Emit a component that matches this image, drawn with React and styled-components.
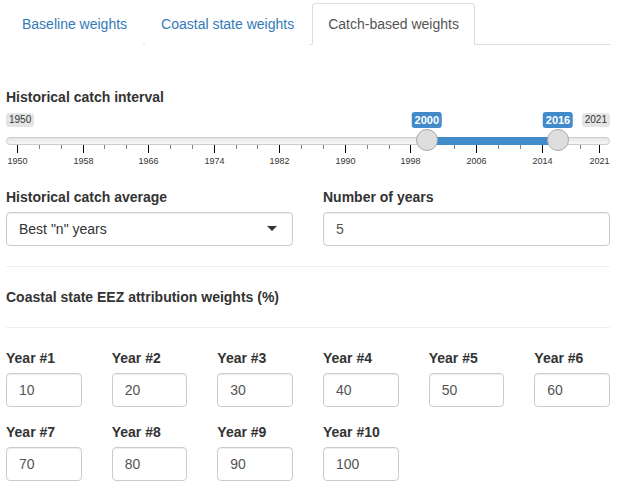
import React from "react";
import styled, { createGlobalStyle } from "styled-components";

const GlobalStyle = createGlobalStyle`
  html, body { margin: 0; padding: 0; background: #fff; }
  body {
    font-family: "Liberation Sans", Arial, Helvetica, sans-serif;
    font-size: 14px;
    line-height: 20px;
    color: #333;
  }
  * { box-sizing: border-box; }
`;

const Page = styled.div`
  width: 620px;
  padding: 3px 10px 0 6px;
`;

const TabBar = styled.ul`
  display: flex;
  list-style: none;
  margin: 0;
  padding: 0;
  border-bottom: 1px solid #ddd;
`;

const Tab = styled.li`
  margin: 0 2px -1px 0;
  padding: 10px 15px;
  line-height: 20px;
  border: 1px solid ${(p) => (p.$active ? "#ddd" : "transparent")};
  border-bottom-color: transparent;
  border-radius: 4px 4px 0 0;
  background: #fff;
  color: ${(p) => (p.$active ? "#555" : "#337ab7")};
  cursor: pointer;
`;

const TabContent = styled.div`
  padding-top: 42px;
`;

const FormGroup = styled.div`
  margin-bottom: 15px;
`;

const Label = styled.label`
  display: block;
  font-weight: 700;
  margin-bottom: 5px;
`;

const TwoCol = styled.div`
  display: grid;
  grid-template-columns: 1fr 1fr;
  column-gap: 30px;
`;

const Divider = styled.hr`
  border: 0;
  border-top: 1px solid #eee;
  height: 0;
  margin: ${(p) => p.$top}px 0 20px 0;
`;

const SectionTitle = styled.div`
  font-weight: 700;
`;

const YearGrid = styled.div`
  display: grid;
  grid-template-columns: repeat(6, 1fr);
  column-gap: 30px;
`;

const Input = styled.input`
  display: block;
  width: 100%;
  height: 34px;
  padding: 6px 12px;
  font-family: inherit;
  font-size: 14px;
  line-height: 20px;
  color: #555;
  background: #fff;
  border: 1px solid #ccc;
  border-radius: 4px;
  box-shadow: inset 0 1px 1px rgba(0, 0, 0, 0.075);
  outline: none;
`;

const SelectBox = styled.div`
  display: flex;
  align-items: center;
  justify-content: space-between;
  height: 34px;
  padding: 6px 15px 6px 12px;
  color: #333;
  background: #fff;
  border: 1px solid #ccc;
  border-radius: 4px;
  box-shadow: inset 0 1px 1px rgba(0, 0, 0, 0.075);
`;

const Caret = styled.span`
  width: 0;
  height: 0;
  border-style: solid;
  border-width: 5px 5px 0 5px;
  border-color: #333 transparent transparent transparent;
  margin-top: -2px;
`;

/* ---------- range slider ---------- */
const MIN = 1950;
const MAX = 2021;
const PX = 582 / (MAX - MIN);
const pos = (v) => 11 + (v - MIN) * PX;

const Slider = styled.div`
  position: relative;
  height: 60px;
`;

const Track = styled.div`
  position: absolute;
  left: 0;
  right: 0;
  top: 25px;
  height: 8px;
  border: 1px solid #ccc;
  border-radius: 8px;
  background: linear-gradient(to bottom, #dedede -50%, #fff 150%);
  background-color: #ededed;
`;

const Bar = styled.div`
  position: absolute;
  top: 25px;
  height: 8px;
  background: #428bca;
`;

const Handle = styled.div`
  position: absolute;
  top: 17px;
  width: 22px;
  height: 22px;
  border: 1px solid #ababab;
  border-radius: 50%;
  background: #dedede;
`;

const EdgeTag = styled.span`
  position: absolute;
  top: 1px;
  ${(p) => (p.$side === "right" ? "right: 0;" : "left: 0;")}
  padding: 1px 3px;
  font-size: 10px;
  line-height: 12px;
  color: #333;
  background: rgba(0, 0, 0, 0.1);
  border-radius: 3px;
`;

const ValueTag = styled.span`
  position: absolute;
  top: 0;
  transform: translateX(-50%);
  padding: 1px 3px;
  font-size: 11px;
  font-weight: 700;
  line-height: 14px;
  color: #fff;
  background: #428bca;
  border-radius: 3px;
`;

const Tick = styled.span`
  position: absolute;
  top: 33px;
  width: 1px;
  height: ${(p) => (p.$small ? 4 : 8)}px;
  background: #000;
  opacity: ${(p) => (p.$small ? 0.5 : 1)};
`;

const TickText = styled.span`
  position: absolute;
  top: 44px;
  transform: translateX(-50%);
  font-size: 9px;
  line-height: 11px;
  color: #333;
  white-space: nowrap;
`;

const bigTicks = [1950, 1958, 1966, 1974, 1982, 1990, 1998, 2006, 2014, 2021];

function RangeSlider({ from, to }) {
  const smalls = [];
  for (let i = 1; i < bigTicks.length; i++) {
    const a = bigTicks[i - 1];
    const b = bigTicks[i];
    smalls.push(a + (b - a) / 3, a + (2 * (b - a)) / 3);
  }
  return (
    <Slider>
      <EdgeTag>{MIN}</EdgeTag>
      <EdgeTag $side="right">{MAX}</EdgeTag>
      <Track />
      <Bar style={{ left: pos(from), width: pos(to) - pos(from) }} />
      {smalls.map((v, i) => (
        <Tick key={"s" + i} $small style={{ left: Math.round(pos(v)) }} />
      ))}
      {bigTicks.map((v) => (
        <Tick key={v} style={{ left: Math.round(pos(v)) }} />
      ))}
      {bigTicks.map((v) => (
        <TickText key={"t" + v} style={{ left: Math.round(pos(v)) + 0.5 }}>
          {v}
        </TickText>
      ))}
      <ValueTag style={{ left: pos(from) }}>{from}</ValueTag>
      <ValueTag style={{ left: pos(to) }}>{to}</ValueTag>
      <Handle style={{ left: pos(from) - 11 }} />
      <Handle style={{ left: pos(to) - 11 }} />
    </Slider>
  );
}

const years = [10, 20, 30, 40, 50, 60, 70, 80, 90, 100];

export default function App() {
  return (
    <>
      <GlobalStyle />
      <Page>
        <TabBar>
          <Tab>Baseline weights</Tab>
          <Tab>Coastal state weights</Tab>
          <Tab $active>Catch-based weights</Tab>
        </TabBar>
        <TabContent>
          <FormGroup>
            <Label>Historical catch interval</Label>
            <RangeSlider from={2000} to={2016} />
          </FormGroup>
          <TwoCol>
            <FormGroup>
              <Label>Historical catch average</Label>
              <SelectBox>
                <span>Best "n" years</span>
                <Caret />
              </SelectBox>
            </FormGroup>
            <FormGroup>
              <Label>Number of years</Label>
              <Input type="text" value="5" readOnly />
            </FormGroup>
          </TwoCol>
          <Divider $top={5} />
          <SectionTitle>Coastal state EEZ attribution weights (%)</SectionTitle>
          <Divider $top={20} />
          <YearGrid>
            {years.map((v, i) => (
              <FormGroup key={i}>
                <Label>Year #{i + 1}</Label>
                <Input type="text" value={v} readOnly />
              </FormGroup>
            ))}
          </YearGrid>
        </TabContent>
      </Page>
    </>
  );
}
